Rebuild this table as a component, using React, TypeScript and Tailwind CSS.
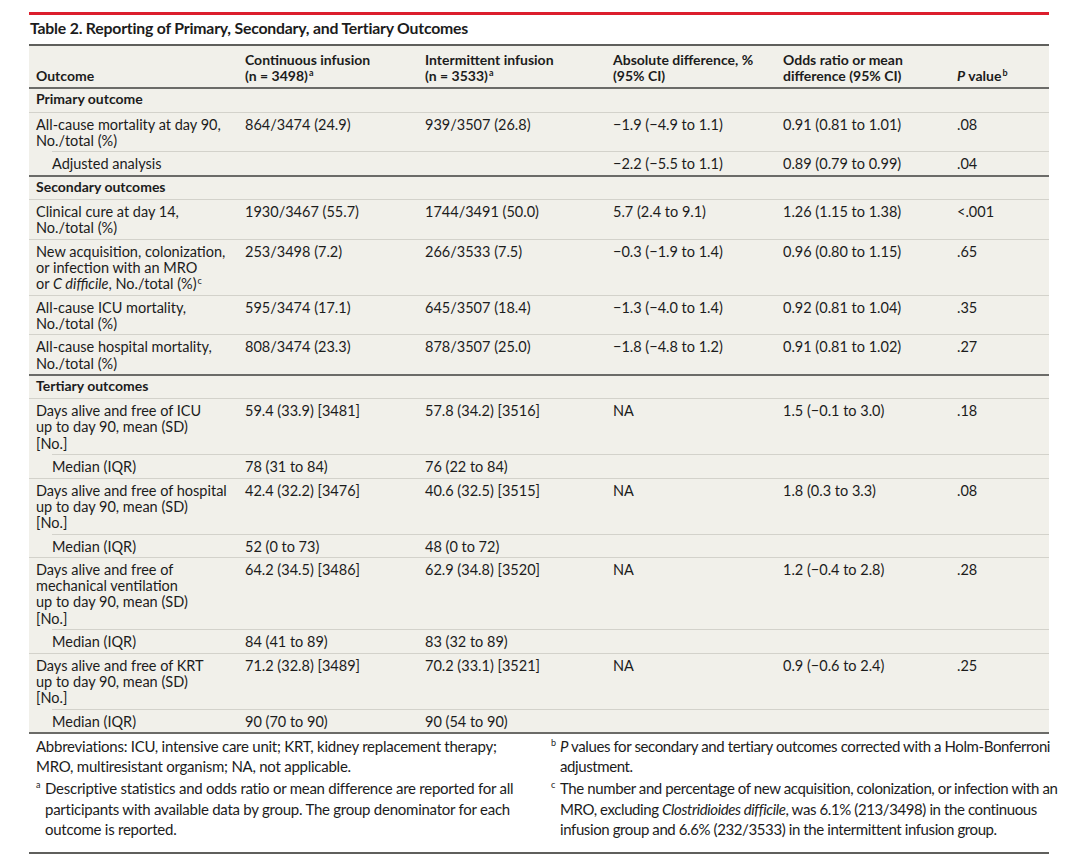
import React from "react";

type Row =
  | { kind: "section"; label: string }
  | {
      kind: "data";
      label: React.ReactNode;
      cells: string[];
      child?: boolean;
      nextChild?: boolean;
      last?: boolean;
    };

const Sup = ({ children }: { children: React.ReactNode }) => (
  <span className="relative -top-[5px] text-[9px] leading-none ml-[1px]">{children}</span>
);

const rows: Row[] = [
  { kind: "section", label: "Primary outcome" },
  {
    kind: "data",
    label: (
      <>
        All-cause mortality at day 90,
        <br />
        No./total (%)
      </>
    ),
    cells: ["864/3474 (24.9)", "939/3507 (26.8)", "−1.9 (−4.9 to 1.1)", "0.91 (0.81 to 1.01)", ".08"],
    nextChild: true,
  },
  {
    kind: "data",
    label: "Adjusted analysis",
    child: true,
    cells: ["", "", "−2.2 (−5.5 to 1.1)", "0.89 (0.79 to 0.99)", ".04"],
    last: true,
  },
  { kind: "section", label: "Secondary outcomes" },
  {
    kind: "data",
    label: (
      <>
        Clinical cure at day 14,
        <br />
        No./total (%)
      </>
    ),
    cells: ["1930/3467 (55.7)", "1744/3491 (50.0)", "5.7 (2.4 to 9.1)", "1.26 (1.15 to 1.38)", "<.001"],
  },
  {
    kind: "data",
    label: (
      <>
        New acquisition, colonization,
        <br />
        or infection with an MRO
        <br />
        or <i>C difficile</i>, No./total (%)<Sup>c</Sup>
      </>
    ),
    cells: ["253/3498 (7.2)", "266/3533 (7.5)", "−0.3 (−1.9 to 1.4)", "0.96 (0.80 to 1.15)", ".65"],
  },
  {
    kind: "data",
    label: (
      <>
        All-cause ICU mortality,
        <br />
        No./total (%)
      </>
    ),
    cells: ["595/3474 (17.1)", "645/3507 (18.4)", "−1.3 (−4.0 to 1.4)", "0.92 (0.81 to 1.04)", ".35"],
  },
  {
    kind: "data",
    label: (
      <>
        All-cause hospital mortality,
        <br />
        No./total (%)
      </>
    ),
    cells: ["808/3474 (23.3)", "878/3507 (25.0)", "−1.8 (−4.8 to 1.2)", "0.91 (0.81 to 1.02)", ".27"],
    last: true,
  },
  { kind: "section", label: "Tertiary outcomes" },
  {
    kind: "data",
    label: (
      <>
        Days alive and free of ICU
        <br />
        up to day 90, mean (SD)
        <br />
        [No.]
      </>
    ),
    cells: ["59.4 (33.9) [3481]", "57.8 (34.2) [3516]", "NA", "1.5 (−0.1 to 3.0)", ".18"],
    nextChild: true,
  },
  { kind: "data", label: "Median (IQR)", child: true, cells: ["78 (31 to 84)", "76 (22 to 84)", "", "", ""] },
  {
    kind: "data",
    label: (
      <>
        Days alive and free of hospital
        <br />
        up to day 90, mean (SD)
        <br />
        [No.]
      </>
    ),
    cells: ["42.4 (32.2) [3476]", "40.6 (32.5) [3515]", "NA", "1.8 (0.3 to 3.3)", ".08"],
    nextChild: true,
  },
  { kind: "data", label: "Median (IQR)", child: true, cells: ["52 (0 to 73)", "48 (0 to 72)", "", "", ""] },
  {
    kind: "data",
    label: (
      <>
        Days alive and free of
        <br />
        mechanical ventilation
        <br />
        up to day 90, mean (SD)
        <br />
        [No.]
      </>
    ),
    cells: ["64.2 (34.5) [3486]", "62.9 (34.8) [3520]", "NA", "1.2 (−0.4 to 2.8)", ".28"],
    nextChild: true,
  },
  { kind: "data", label: "Median (IQR)", child: true, cells: ["84 (41 to 89)", "83 (32 to 89)", "", "", ""] },
  {
    kind: "data",
    label: (
      <>
        Days alive and free of KRT
        <br />
        up to day 90, mean (SD)
        <br />
        [No.]
      </>
    ),
    cells: ["71.2 (32.8) [3489]", "70.2 (33.1) [3521]", "NA", "0.9 (−0.6 to 2.4)", ".25"],
    nextChild: true,
  },
  {
    kind: "data",
    label: "Median (IQR)",
    child: true,
    cells: ["90 (70 to 90)", "90 (54 to 90)", "", "", ""],
    last: true,
  },
];

const grid = "grid grid-cols-[209px_180px_188px_170px_174px_99px]";

function Separator({ last, indent }: { last?: boolean; indent?: boolean }) {
  if (last) return <div className="h-[2px] bg-[#6b6b68]" />;
  return (
    <div className={indent ? "pl-[23px]" : ""}>
      <div className="h-px bg-[#d3d2cb]" />
    </div>
  );
}

export default function App() {
  return (
    <div
      className="min-h-[864px] bg-white text-[#1c1c1c] pt-[12px]"
      style={{ fontFamily: "Lato, 'Open Sans', sans-serif" }}
    >
      <div className="ml-[29px] w-[1020px]">
        <div className="h-[3px] bg-[#dc1e2d]" />
        <h1 className="text-[15.8px] font-bold leading-[20px] pt-[3px] pb-[6px] pl-[1px] tracking-[-0.2px]">
          Table 2. Reporting of Primary, Secondary, and Tertiary Outcomes
        </h1>
        <div className="h-[2px] bg-[#5f5f5c]" />

        <div className="bg-[#f1f0ea] text-[14.5px] leading-[16.2px]">
          {/* header */}
          <div className={`${grid} font-bold pt-[6px] pb-[3px] text-[14px]`}>
            <div className="pl-[7px] self-end">Outcome</div>
            <div className="pl-[7px]">
              Continuous infusion
              <br />
              (n = 3498)<Sup>a</Sup>
            </div>
            <div className="pl-[7px]">
              Intermittent infusion
              <br />
              (n = 3533)<Sup>a</Sup>
            </div>
            <div className="pl-[7px]">
              Absolute difference, %
              <br />
              (95% CI)
            </div>
            <div className="pl-[7px]">
              Odds ratio or mean
              <br />
              difference (95% CI)
            </div>
            <div className="pl-[7px] self-end">
              <i>P</i> value<Sup>b</Sup>
            </div>
          </div>
          <div className="h-[2px] bg-[#6b6b68]" />

          {rows.map((r, i) => {
            if (r.kind === "section") {
              return (
                <React.Fragment key={i}>
                  <div className="pt-[2px] pb-[4px] pl-[7px] font-bold text-[14px]">{r.label}</div>
                  <Separator />
                </React.Fragment>
              );
            }
            return (
              <React.Fragment key={i}>
                <div className={`${grid} pt-[4px] pb-[2.3px]`}>
                  <div className={r.child ? "pl-[23px]" : "pl-[7px]"}>{r.label}</div>
                  {r.cells.map((c, j) => (
                    <div key={j} className="pl-[7px]">
                      {c}
                    </div>
                  ))}
                </div>
                <Separator last={r.last} indent={r.nextChild} />
              </React.Fragment>
            );
          })}
        </div>

        {/* footnotes */}
        <div className="grid grid-cols-[522px_498px] text-[15px] leading-[20.5px] pt-[1.5px] pb-[12px] tracking-[-0.25px] whitespace-nowrap">
          <div className="pl-[7px]">
            <p>
              Abbreviations: ICU, intensive care unit; KRT, kidney replacement therapy;
              <br />
              MRO, multiresistant organism; NA, not applicable.
            </p>
            <p className="mt-[1.5px] pl-[9px] relative">
              <span className="absolute left-0 top-[-3px] text-[9px]">a</span>
              Descriptive statistics and odds ratio or mean difference are reported for all
              <br />
              participants with available data by group. The group denominator for each
              <br />
              outcome is reported.
            </p>
          </div>
          <div className="tracking-[-0.4px]">
            <p className="pl-[9px] relative">
              <span className="absolute left-0 top-[-3px] text-[9px]">b</span>
              <i>P</i> values for secondary and tertiary outcomes corrected with a Holm-Bonferroni
              <br />
              adjustment.
            </p>
            <p className="mt-[1.5px] pl-[9px] relative">
              <span className="absolute left-0 top-[-3px] text-[9px]">c</span>
              The number and percentage of new acquisition, colonization, or infection with an
              <br />
              MRO, excluding <i>Clostridioides difficile</i>, was 6.1% (213/3498) in the continuous
              <br />
              infusion group and 6.6% (232/3533) in the intermittent infusion group.
            </p>
          </div>
        </div>
        <div className="h-[2px] bg-[#5f5f5c]" />
      </div>
    </div>
  );
}
